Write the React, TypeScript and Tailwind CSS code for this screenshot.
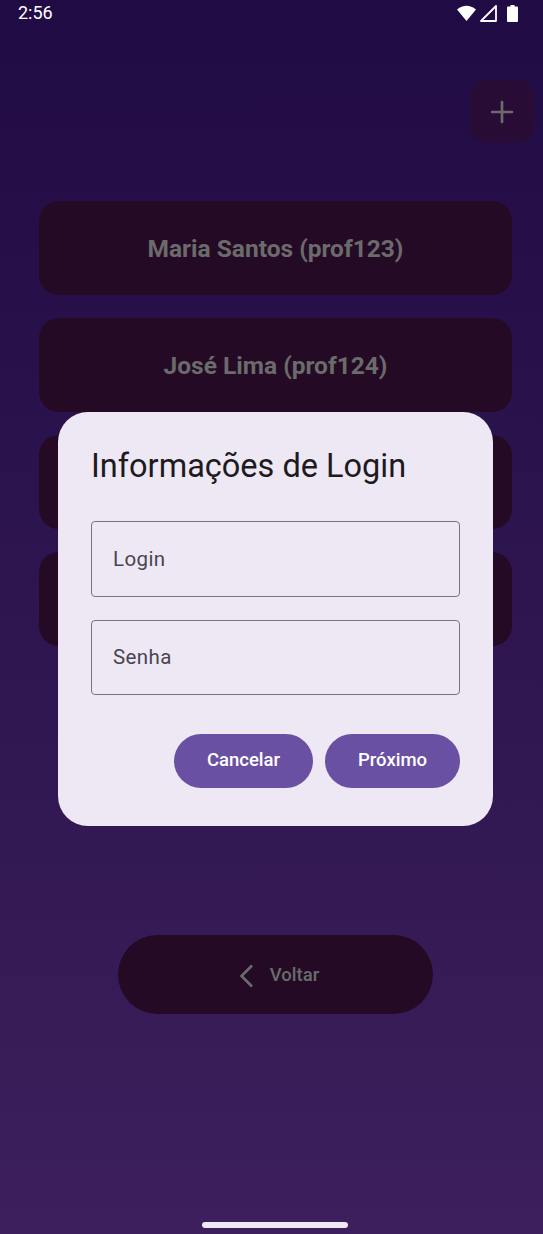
import { Plus } from "lucide-react";

const professores = [
  "Maria Santos (prof123)",
  "José Lima (prof124)",
  "Ana Souza (prof125)",
  "Carlos Melo (prof126)",
];

const StatusBar = () => (
  <div className="h-[26px] px-[18px] flex items-center justify-between text-white">
    <span className="text-[18px] leading-none">2:56</span>
    <div className="flex items-center gap-[3px] pr-[7px]">
      {/* wifi */}
      <svg width="19" height="16" viewBox="0 0 19 16">
        <path d="M0 4.5 Q9.5 -3 19 4.5 L9.5 16 Z" fill="white" />
      </svg>
      {/* signal */}
      <svg width="17" height="17" viewBox="0 0 17 17" className="ml-[1px]">
        <path d="M16 1 L16 16 L1 16 Z" fill="none" stroke="white" strokeWidth="1.8" strokeLinejoin="round" />
      </svg>
      {/* battery */}
      <svg width="11" height="17" viewBox="0 0 11 17" className="ml-[7px]">
        <rect x="3.5" y="0" width="4" height="2" fill="white" />
        <rect x="0" y="1.5" width="11" height="15.5" rx="1" fill="white" />
      </svg>
    </div>
  </div>
);

export default function App() {
  return (
    <div
      className="relative h-[1234px] w-full overflow-hidden bg-gradient-to-b from-[#210b44] to-[#3c1f5c]"
      style={{ fontFamily: "Roboto, 'Noto Sans', sans-serif" }}
    >
      <StatusBar />

      {/* add button */}
      <div className="mt-[54px] flex justify-end pr-[9px]">
        <button className="w-[64px] h-[63px] rounded-[16px] bg-[#290c35] flex items-center justify-center">
          <Plus size={34} strokeWidth={1.9} color="#6b6b6b" />
        </button>
      </div>

      {/* list */}
      <div className="mt-[58px] ml-[39px] w-[473px] flex flex-col gap-[23px]">
        {professores.map((p) => (
          <div
            key={p}
            className="h-[94px] rounded-[20px] bg-[#250a26] flex items-center justify-center pt-[3px]"
          >
            <span className="text-[24.5px] font-bold text-[#6b6b6b]">{p}</span>
          </div>
        ))}
      </div>

      {/* back */}
      <button className="mt-[289px] ml-[118px] w-[315px] h-[79px] rounded-full bg-[#250a26] flex items-center justify-center gap-[16px] pl-[6px] pt-[2px]">
        <svg width="16" height="24" viewBox="0 0 16 24">
          <path d="M14 1.5 L3.5 12 L14 22.5" fill="none" stroke="#6b6b6b" strokeWidth="2.6" />
        </svg>
        <span className="text-[18.5px] font-medium text-[#6b6b6b]">Voltar</span>
      </button>

      {/* dialog */}
      <div className="absolute left-[58px] top-[412px] w-[435px] h-[414px] rounded-[30px] bg-[#eee8f4] px-[33px] pt-[34px]">
        <h2 className="text-[32.5px] leading-[40px] text-[#1d1b20]">Informações de Login</h2>

        <div className="mt-[35px] flex flex-col gap-[23px]">
          <div className="h-[76px] rounded-[4px] border border-[#79747e] flex items-center px-[21px]">
            <span className="text-[20.5px] tracking-[0.4px] text-[#49454f]">Login</span>
          </div>
          <div className="h-[75px] rounded-[4px] border border-[#79747e] flex items-center px-[21px]">
            <span className="text-[20.5px] tracking-[0.4px] text-[#49454f]">Senha</span>
          </div>
        </div>

        <div className="mt-[39px] flex justify-end gap-[12px]">
          <button className="w-[139px] h-[54px] rounded-full bg-[#6a50a3] text-white text-[18.5px] font-medium">
            Cancelar
          </button>
          <button className="w-[135px] h-[54px] rounded-full bg-[#6a50a3] text-white text-[18.5px] font-medium">
            Próximo
          </button>
        </div>
      </div>

      {/* home indicator */}
      <div className="absolute bottom-[6px] left-[202px] w-[146px] h-[6px] rounded-full bg-[#eee8f4]" />
    </div>
  );
}
